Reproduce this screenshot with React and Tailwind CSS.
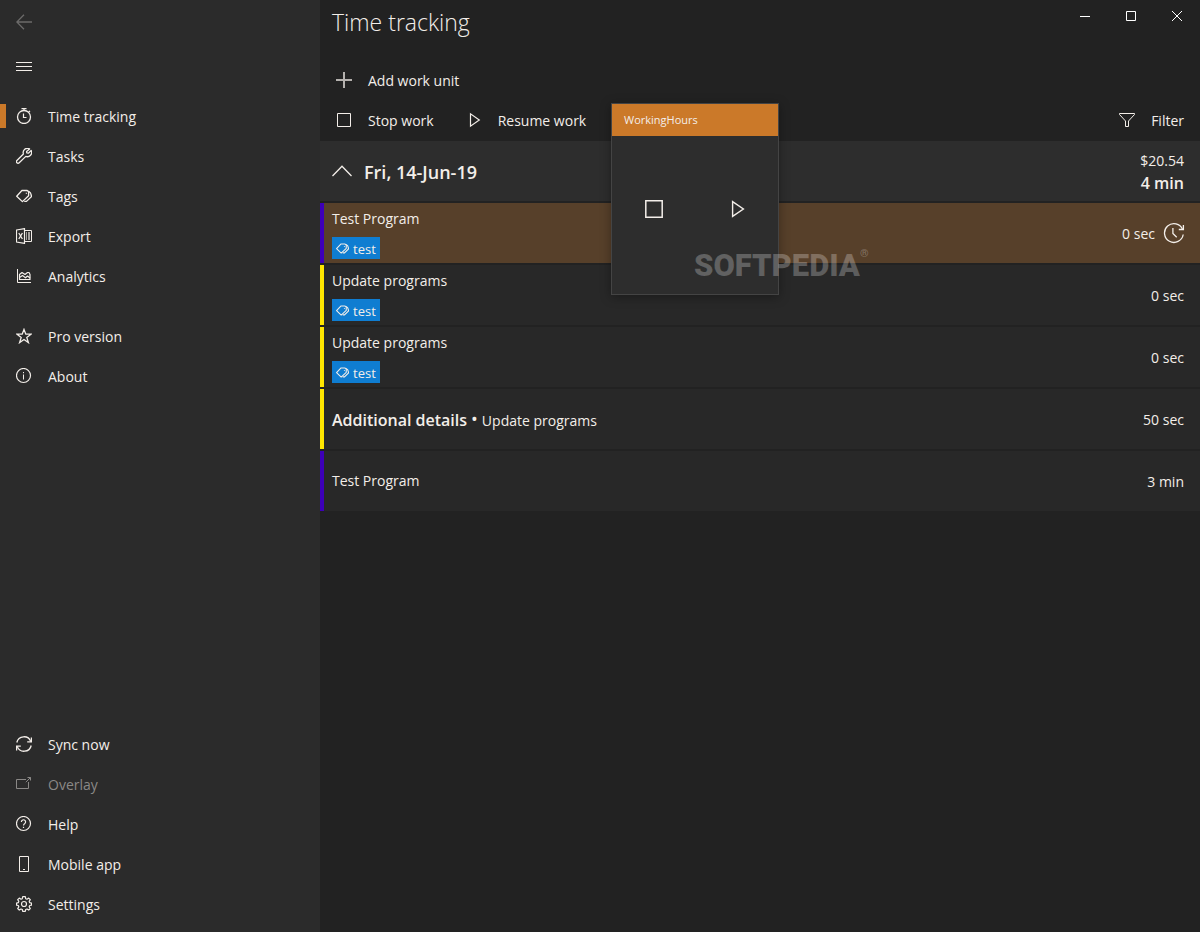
import { useState } from 'react';

const Icon = ({ size = 16, children, className = '' }) => (
  <svg
    width={size}
    height={size}
    viewBox="0 0 16 16"
    fill="none"
    stroke="currentColor"
    strokeWidth="1"
    className={`shrink-0 ${className}`}
    aria-hidden="true"
  >
    {children}
  </svg>
);

const BackIcon = () => (
  <Icon>
    <path strokeWidth="1.3" d="M16 8H1M8 .8L.8 8 8 15.2" />
  </Icon>
);

const MenuIcon = () => (
  <Icon>
    <path d="M0 4.5h16M0 8.5h16M0 12.5h16" />
  </Icon>
);

const StopwatchIcon = () => (
  <Icon>
    <circle cx="8" cy="9" r="6.5" strokeWidth="1.3" />
    <path strokeWidth="1.2" d="M5.5.6h5M8 .6v2M12.2 4.6l1.8-1.8M7.5 5.5v4H10.5" />
  </Icon>
);

const WrenchIcon = () => (
  <Icon>
    <path
      strokeWidth="1.3"
      strokeLinejoin="round"
      d="M13.6.9A4.3 4.3 0 0 0 7.4 6L.9 12.5a1.6 1.6 0 0 0 0 2.3 1.6 1.6 0 0 0 2.3 0L9.8 8.4A4.3 4.3 0 0 0 15.2 2.5L12.4 5.2 10.8 4.9 10.6 3.6z"
    />
  </Icon>
);

const TagIcon = ({ size }) => (
  <Icon size={size}>
    <path strokeWidth="1.3" strokeLinejoin="round" d="M.7 8.2L5.9 2.5H11.2L12.6 3.8V7.8L6.4 13.6z" />
    <path strokeWidth="1.3" d="M12.4 3C14.6 4.2 15.5 6 15.4 8.6L10.4 13.4H8.2M10.4 4.8v1" />
  </Icon>
);

const ExcelIcon = () => (
  <Icon>
    <path d="M9 2.5h6.5v11H9" />
    <path d="M.5 2L8.5.6v14.8L.5 14z" strokeWidth="1.2" />
    <path strokeWidth="1.3" d="M2.8 5l3.6 6M6.4 5l-3.6 6" />
    <path strokeOpacity=".6" d="M10.5 4v8M12.5 4v8M13.5 4v8" />
  </Icon>
);

const ChartIcon = () => (
  <Icon>
    <path d="M1.5 1v13.5H15" />
    <path strokeWidth="1.2" strokeLinejoin="round" d="M3.5 11.5V6.5L6 4.5l3 2L11.5 4.5H13L14 6.5v5z" />
    <path strokeWidth="1.2" strokeLinejoin="round" d="M3.5 9.5L6.5 7.6l3 2.2L11.5 8l2.5 2" />
  </Icon>
);

const StarIcon = () => (
  <Icon>
    <path strokeWidth="1.3" d="M8 1.4l1.8 4.8h5.2l-4.2 3.2 1.6 5.2L8 11.5l-4.4 3.1 1.6-5.2L1 6.2h5.2z" />
  </Icon>
);

const InfoIcon = () => (
  <Icon>
    <circle cx="7.5" cy="7.5" r="7" strokeWidth="1.2" />
    <path d="M7.5 6.5v5M7.5 4v1.2" />
  </Icon>
);

const SyncIcon = () => (
  <Icon>
    <path strokeWidth="1.3" d="M.8 6.5A7.3 7.3 0 0 1 14.8 5.6M15.2 9.5A7.3 7.3 0 0 1 1.2 10.4" />
    <path strokeWidth="1.3" d="M15.4 1.6v4.2h-4.2M.6 14.4v-4.2h4.2" />
  </Icon>
);

const OverlayIcon = () => (
  <Icon>
    <path d="M10 3.5H.5v9h12V6M9.8 6.2L14.5 1.5M11.5 1.5h3v3" />
  </Icon>
);

const HelpIcon = () => (
  <Icon>
    <circle cx="7.5" cy="7.5" r="7" strokeWidth="1.2" />
    <path strokeWidth="1.2" d="M5.4 6a2.1 2.1 0 1 1 3.4 1.5c-.8.6-1.3 1-1.3 2M7.5 10.8V12" />
  </Icon>
);

const PhoneIcon = () => (
  <Icon>
    <path d="M3.5.5h9v15h-9zM7 13.5h2" />
  </Icon>
);

const GearIcon = () => (
  <Icon>
    <path
      strokeWidth="1.2"
      strokeLinejoin="round"
      d="M6.7.7h2.6l.4 2 1.3.5 1.7-1.1 1.6 1.6-1.1 1.7.5 1.3 1.8.4v2l-1.8.4-.5 1.3 1.1 1.7-1.6 1.6-1.7-1.1-1.3.5-.4 1.8H6.7l-.4-1.8-1.3-.5-1.7 1.1-1.6-1.6 1.1-1.7-.5-1.3L.5 9.1v-2l1.8-.4.5-1.3-1.1-1.7 1.6-1.6L5 3.2l1.3-.5z"
    />
    <circle cx="8" cy="8" r="2.5" strokeWidth="1.2" />
  </Icon>
);

const PlusIcon = () => (
  <Icon>
    <path strokeWidth="2" strokeOpacity=".7" d="M8 0v16M0 8h16" />
  </Icon>
);

const StopIcon = () => (
  <Icon>
    <path d="M1.5 1.5h13v13h-13z" />
  </Icon>
);

const PlayIcon = () => (
  <Icon>
    <path strokeWidth="1.2" d="M4.5 1.8v12.4L13.3 8z" />
  </Icon>
);

const FilterIcon = () => (
  <Icon>
    <path d="M.5 1.5h15v1L9.5 9v5.5h-3V9L.5 2.5z" />
  </Icon>
);

const ClockIcon = () => (
  <svg width="22" height="22" viewBox="0 0 22 22" fill="none" stroke="currentColor" strokeWidth="1.3" className="-mr-px shrink-0" aria-hidden="true">
    <path d="M20.2 12.5A9.4 9.4 0 1 1 19.6 7.4" />
    <path d="M20.4 3v4.5h-4.6M9.9 6v5.5l3.8 3.8" />
  </svg>
);

const mainLinks = [
  { label: 'Time tracking', icon: StopwatchIcon, active: true },
  { label: 'Tasks', icon: WrenchIcon },
  { label: 'Tags', icon: TagIcon },
  { label: 'Export', icon: ExcelIcon },
  { label: 'Analytics', icon: ChartIcon }
];

const infoLinks = [
  { label: 'Pro version', icon: StarIcon },
  { label: 'About', icon: InfoIcon }
];

const bottomLinks = [
  { label: 'Sync now', icon: SyncIcon },
  { label: 'Overlay', icon: OverlayIcon, disabled: true },
  { label: 'Help', icon: HelpIcon },
  { label: 'Mobile app', icon: PhoneIcon },
  { label: 'Settings', icon: GearIcon }
];

const workUnits = [
  { id: 1, task: 'Test Program', tag: 'test', time: '0 sec', color: 'border-[#3d00b8]', running: true },
  { id: 2, task: 'Update programs', tag: 'test', time: '0 sec', color: 'border-[#ffe600]' },
  { id: 3, task: 'Update programs', tag: 'test', time: '0 sec', color: 'border-[#ffe600]' },
  { id: 4, task: 'Update programs', details: 'Additional details', time: '50 sec', color: 'border-[#ffe600]' },
  { id: 5, task: 'Test Program', time: '3 min', color: 'border-[#3d00b8]' }
];

function NavList({ items, className = '' }) {
  return (
    <ul className={className}>
      {items.map(({ label, icon: NavIcon, active, disabled }) => (
        <li key={label}>
          <button
            type="button"
            disabled={disabled}
            className="flex h-10 w-full items-center text-left hover:bg-white/5 disabled:text-[#8a8886]"
          >
            <span className={`h-6 w-[6px] ${active ? 'bg-[#cb7929]' : ''}`} />
            <span className="ml-[10px] mr-4">
              <NavIcon />
            </span>
            <span className="pt-[2px]">{label}</span>
          </button>
        </li>
      ))}
    </ul>
  );
}

function ToolButton({ icon: ToolIcon, children }) {
  return (
    <button type="button" className="flex h-10 items-center gap-4 px-4 hover:bg-white/5">
      <ToolIcon />
      <span className="pt-[2px]">{children}</span>
    </button>
  );
}

function WorkUnit({ unit }) {
  return (
    <li
      className={`flex h-15 items-center justify-between border-l-4 pl-2 pr-4 ${unit.color} ${
        unit.running ? 'bg-[#57402a]' : 'bg-[#282828]'
      }`}
    >
      <div>
        {unit.details ? (
          <p className="flex items-baseline gap-1 pt-[2px] leading-6">
            <span className="text-base font-semibold">{unit.details}</span>
            <span className="text-lg leading-6">•</span>
            {unit.task}
          </p>
        ) : (
          <p className="leading-6">{unit.task}</p>
        )}
        {unit.tag && (
          <span className="mt-[6px] flex h-[22px] w-fit items-center gap-1 bg-[#0f7dd1] px-1 text-[13px]">
            <TagIcon size={13} />
            <span className="pt-[2px]">{unit.tag}</span>
          </span>
        )}
      </div>
      <div className="flex items-center gap-2">
        <span className="pt-[2px]">{unit.time}</span>
        {unit.running && <ClockIcon />}
      </div>
    </li>
  );
}

export default function App() {
  const [open, setOpen] = useState(true);

  return (
    <div className="relative flex min-h-screen bg-[#222222] font-['Open_Sans','Noto_Sans',sans-serif] text-sm text-[#f3eee9]">
      {/* Sidebar */}
      <aside className="flex w-80 shrink-0 flex-col bg-[#2b2b2b] pb-2">
        <button type="button" aria-label="Back" className="flex h-11 w-12 items-center justify-center text-[#6c6b6a]">
          <BackIcon />
        </button>
        <button type="button" aria-label="Menu" className="flex h-11 w-12 items-center justify-center">
          <MenuIcon />
        </button>
        <nav className="mt-2 flex flex-1 flex-col">
          <NavList items={mainLinks} />
          <NavList items={infoLinks} className="mt-5" />
          <NavList items={bottomLinks} className="mt-auto" />
        </nav>
      </aside>

      {/* Content */}
      <main className="min-w-0 flex-1">
        <header className="flex h-15 items-start justify-between">
          <h1 className="pl-3 pt-1 text-[23px] font-light leading-9">Time tracking</h1>
          <div className="flex text-white">
            <button type="button" aria-label="Minimize" className="flex h-8 w-[46px] items-center justify-center">
              <Icon><path d="M3 8.5h10" /></Icon>
            </button>
            <button type="button" aria-label="Maximize" className="flex h-8 w-[46px] items-center justify-center">
              <Icon><path d="M3.5 3.5h9v9h-9z" /></Icon>
            </button>
            <button type="button" aria-label="Close" className="flex h-8 w-[46px] items-center justify-center">
              <Icon><path d="M3 3l10 10M13 3L3 13" /></Icon>
            </button>
          </div>
        </header>

        {/* Toolbar */}
        <div>
          <ToolButton icon={PlusIcon}>Add work unit</ToolButton>
          <div className="flex">
            <ToolButton icon={StopIcon}>Stop work</ToolButton>
            <ToolButton icon={PlayIcon}>Resume work</ToolButton>
            <div className="ml-auto">
              <ToolButton icon={FilterIcon}>Filter</ToolButton>
            </div>
          </div>
        </div>

        {/* Work units of the day */}
        <section className="mt-px">
          <div className="flex h-15 items-center justify-between bg-[#2d2d2d] pr-4">
            <button
              type="button"
              aria-expanded={open}
              onClick={() => setOpen(!open)}
              className="flex items-center gap-3 pl-3 text-lg font-semibold"
            >
              <svg width="20" height="12" viewBox="0 0 20 12" fill="none" stroke="currentColor" strokeWidth="1.3" aria-hidden="true">
                <path d={open ? 'M.5 11L10 1.2 19.5 11' : 'M.5 1L10 10.8 19.5 1'} />
              </svg>
              <span className="pt-[2px]">Fri, 14-Jun-19</span>
            </button>
            <div className="pt-1 text-right">
              <p className="leading-5">$20.54</p>
              <p className="text-base font-semibold leading-6">4 min</p>
            </div>
          </div>
          {open && (
            <ul className="mt-[2px] flex flex-col gap-[2px]">
              {workUnits.map((unit) => (
                <WorkUnit key={unit.id} unit={unit} />
              ))}
            </ul>
          )}
        </section>
      </main>

      {/* Floating mini window */}
      <div className="absolute left-[611px] top-[103px] flex h-48 w-42 flex-col border border-[#444444] bg-[#2d2d2d] shadow-[0_2px_10px_rgba(0,0,0,0.35)]">
        <div className="flex h-8 items-center bg-[#cb7929] px-3 text-[11px]">WorkingHours</div>
        <div className="grid flex-1 grid-cols-2 pb-3">
          <button type="button" aria-label="Stop" className="flex items-center justify-center">
            <svg width="18" height="18" viewBox="0 0 18 18" fill="none" stroke="currentColor" strokeWidth="1.5" aria-hidden="true">
              <path d="M.8.8h16.4v16.4H.8z" />
            </svg>
          </button>
          <button type="button" aria-label="Resume" className="flex items-center justify-center">
            <svg width="16" height="18" viewBox="0 0 16 18" fill="none" stroke="currentColor" strokeWidth="1.4" aria-hidden="true">
              <path d="M3.6 1.6v14.8L14.4 9z" />
            </svg>
          </button>
        </div>
      </div>

      {/* Watermark */}
      <div className="pointer-events-none absolute left-[694px] top-[248px] flex items-start font-['Roboto',sans-serif] text-[31px] font-black leading-9 text-white/25">
        SOFTPEDIA
        <span className="text-[11px] font-bold leading-3">®</span>
      </div>
    </div>
  );
}
